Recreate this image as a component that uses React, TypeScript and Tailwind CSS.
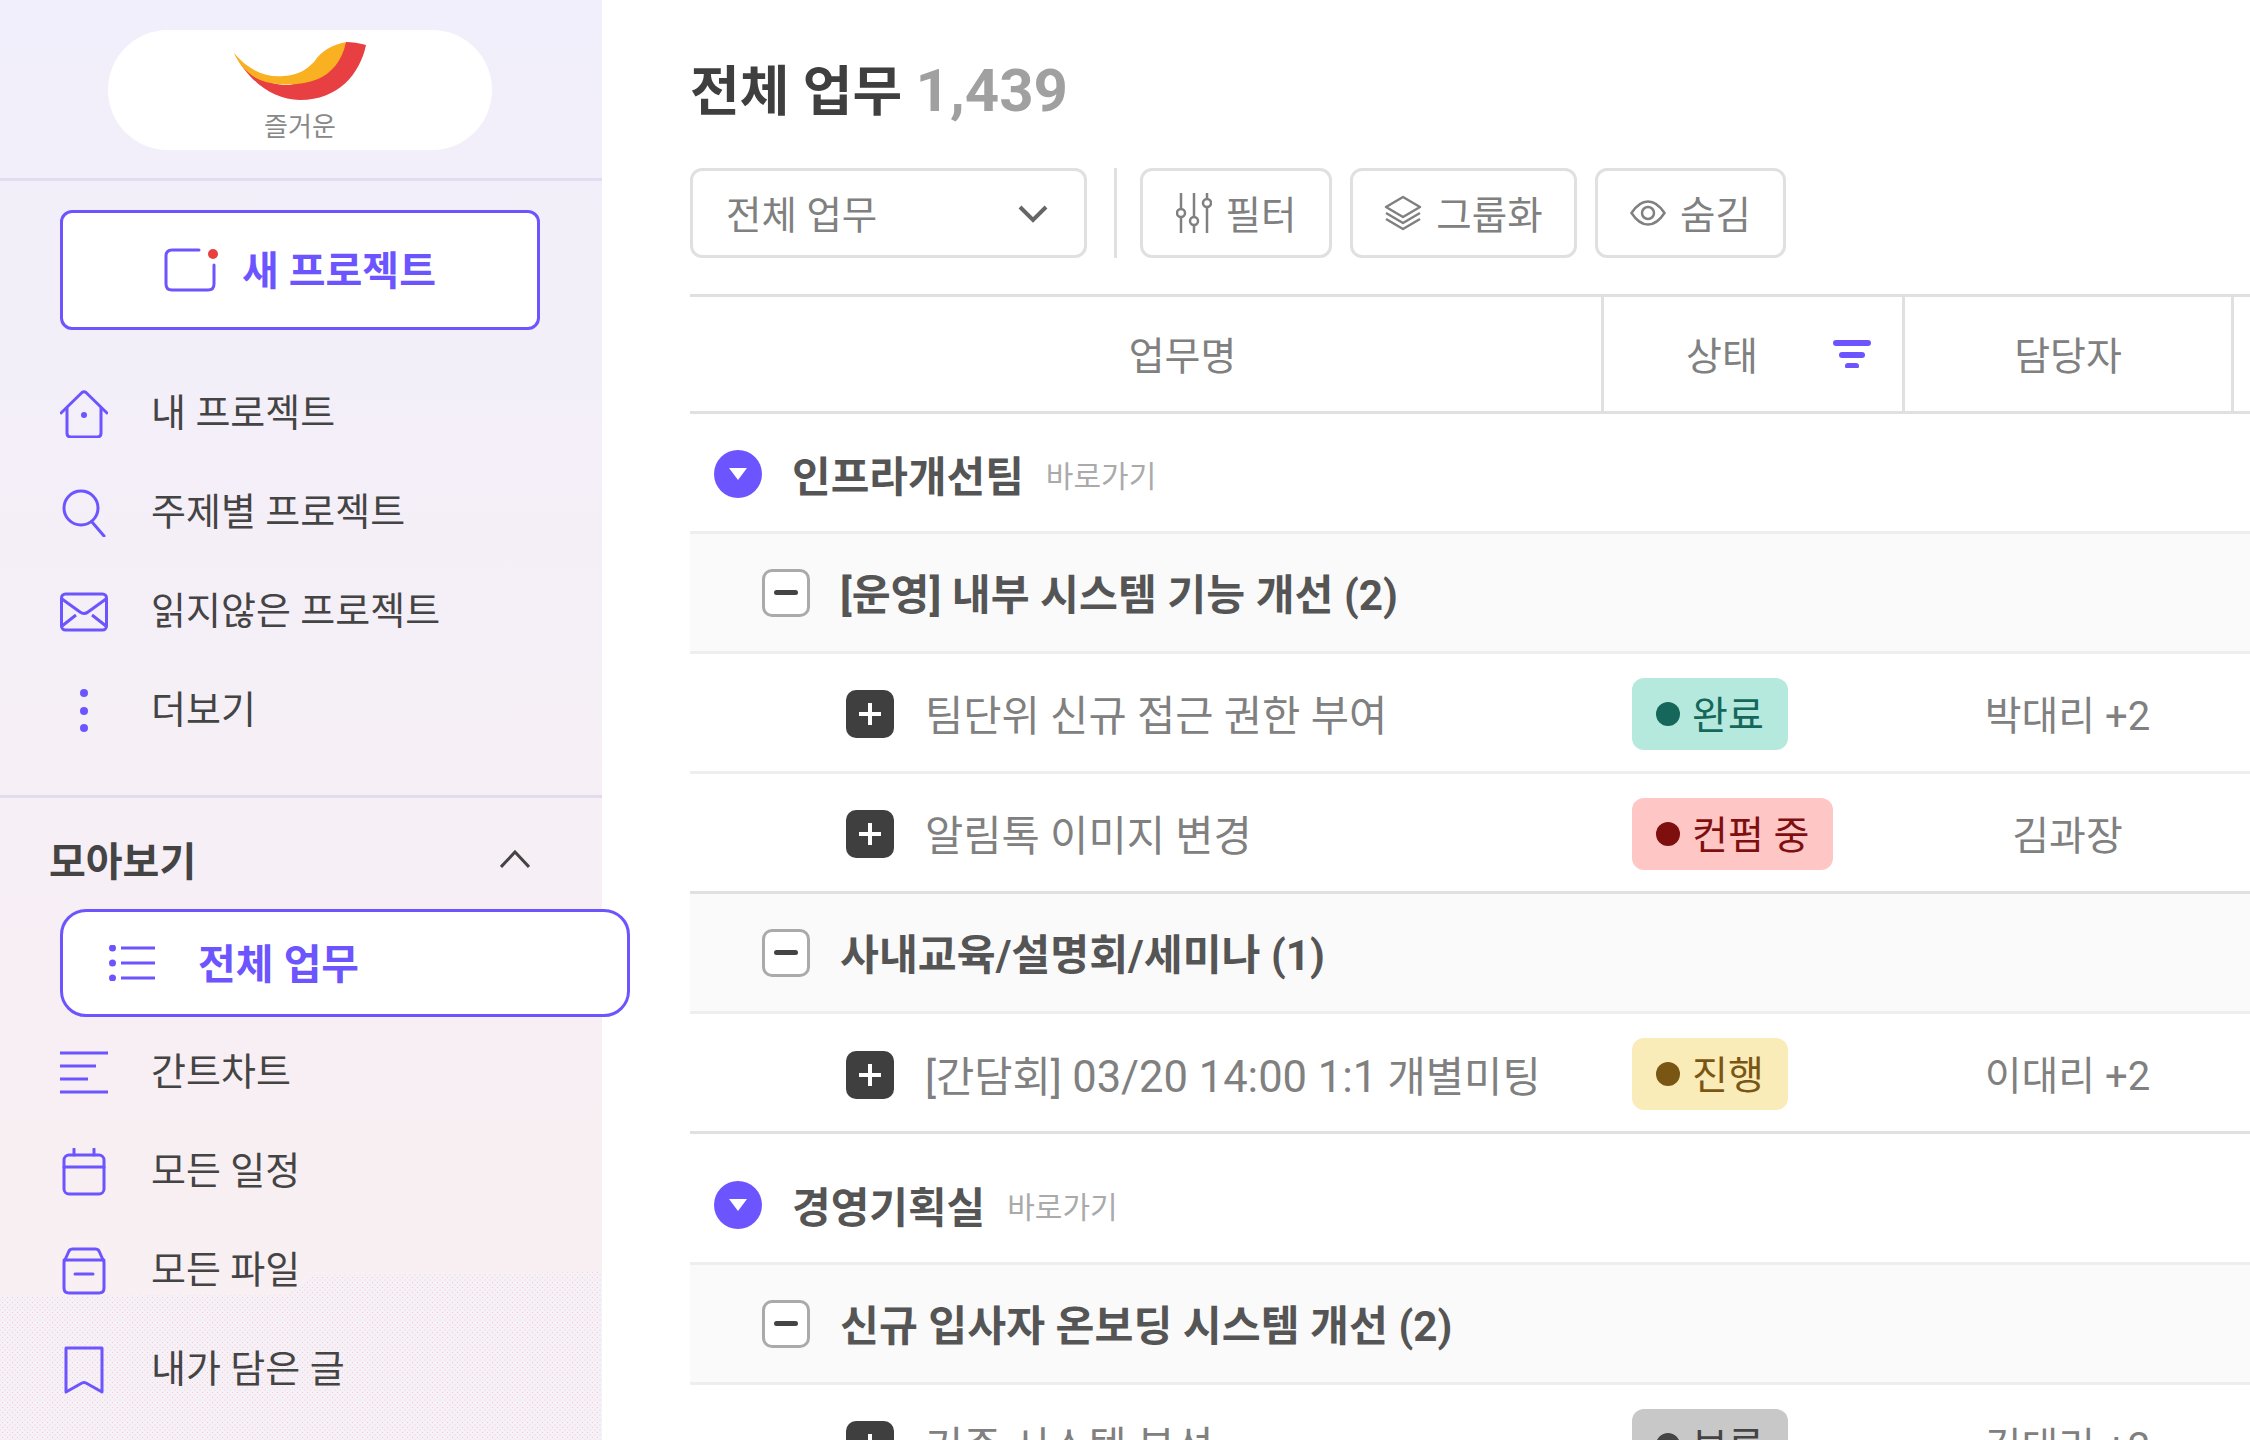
// 전체 업무 화면

const SANS = "font-['Roboto','Noto_Sans_CJK_KR',sans-serif]";

function HomeIcon() {
  return (
    <svg width="48" height="48" viewBox="0 0 48 48" fill="none" stroke="#6c55ff" strokeWidth="3" strokeLinecap="round" strokeLinejoin="round">
      <path d="M1 23 L22 2.5 Q24 1 26 2.5 L47 23" />
      <path d="M7 18 V43 Q7 47 11 47 H37 Q41 47 41 43 V18" />
      <circle cx="24" cy="25" r="3" fill="#6c55ff" stroke="none" />
    </svg>
  );
}

function SearchIcon() {
  return (
    <svg width="48" height="48" viewBox="0 0 48 48" fill="none" stroke="#6c55ff" strokeWidth="3" strokeLinecap="round">
      <circle cx="21" cy="19" r="17" />
      <path d="M32 33 L44 47" />
    </svg>
  );
}

function MailIcon() {
  return (
    <svg width="48" height="48" viewBox="0 0 48 48" fill="none" stroke="#6c55ff" strokeWidth="3" strokeLinejoin="round">
      <rect x="1.5" y="6" width="45" height="36" rx="4" />
      <path d="M2 11 L20 24 Q24 27 28 24 L46 11" />
      <path d="M2 38 L16 27 M46 38 L32 27" />
    </svg>
  );
}

function DotsIcon() {
  return (
    <svg width="48" height="48" viewBox="0 0 48 48" fill="#6c55ff">
      <circle cx="24" cy="6" r="4" />
      <circle cx="24" cy="24" r="4" />
      <circle cx="24" cy="41" r="4" />
    </svg>
  );
}

function GanttIcon() {
  return (
    <svg width="48" height="48" viewBox="0 0 48 48" fill="none" stroke="#6c55ff" strokeWidth="3">
      <path d="M0 4 H48 M0 17 H36 M0 30 H28 M0 43 H48" />
    </svg>
  );
}

function CalendarIcon() {
  return (
    <svg width="48" height="48" viewBox="0 0 48 48" fill="none" stroke="#6c55ff" strokeWidth="3" strokeLinecap="round">
      <rect x="4" y="7" width="40" height="39" rx="5" />
      <path d="M4 19 H44 M14 1 V7 M34 1 V7" />
    </svg>
  );
}

function BoxIcon() {
  return (
    <svg width="48" height="48" viewBox="0 0 48 48" fill="none" stroke="#6c55ff" strokeWidth="3" strokeLinecap="round" strokeLinejoin="round">
      <path d="M4 15 L9 4 Q10 2 13 2 H35 Q38 2 39 4 L44 15 V41 Q44 46 39 46 H9 Q4 46 4 41 Z" />
      <path d="M4 13 H44 M15 27 H33" />
    </svg>
  );
}

function BookmarkIcon() {
  return (
    <svg width="48" height="48" viewBox="0 0 48 48" fill="none" stroke="#6c55ff" strokeWidth="3" strokeLinejoin="round">
      <path d="M6 2 H42 V46 L26 37 Q24 36 22 37 L6 46 Z" />
    </svg>
  );
}

function ListIcon() {
  return (
    <svg width="46" height="36" viewBox="0 0 46 36" fill="none" stroke="#6c55ff" strokeWidth="3">
      <path d="M12 3 H46 M12 18 H46 M12 33 H46" />
      <g fill="#6c55ff" stroke="none">
        <circle cx="3.5" cy="3" r="3.5" />
        <circle cx="3.5" cy="18" r="3.5" />
        <circle cx="3.5" cy="33" r="3.5" />
      </g>
    </svg>
  );
}

function NewProjectIcon() {
  return (
    <svg width="54" height="44" viewBox="0 0 54 44" fill="none" stroke="#6c55ff" strokeWidth="3" strokeLinecap="round">
      <path d="M35 2 H8 Q2 2 2 8 V36 Q2 42 8 42 H44 Q50 42 50 36 V17" />
      <circle cx="49" cy="6" r="5" fill="#e8403f" stroke="none" />
    </svg>
  );
}

function SwooshLogo() {
  return (
    <svg width="132" height="58" viewBox="0 0 132 58">
      <path d="M0 11 C14 38 38 58 66 58 C104 58 126 32 132 3 C125 1 118 0 112 0 C104 18 84 36 56 43 C32 44 12 30 0 11 Z" fill="#e83f42" />
      <path d="M0 11 C14 28 32 36 50 34 C64 33 72 28 80 20 C88 8 98 3 112 0 C108 20 96 32 84 37 C64 45 36 44 22 36 C12 30 5 22 0 11 Z" fill="#f9b122" />
    </svg>
  );
}

function SlidersIcon() {
  return (
    <svg width="36" height="40" viewBox="0 0 36 40" fill="none" stroke="#808080" strokeWidth="2.5">
      <path d="M5 0 V16 M5 24 V40 M18 0 V24 M18 32 V40 M31 0 V6 M31 14 V40" />
      <circle cx="5" cy="20" r="4" />
      <circle cx="18" cy="28" r="4" />
      <circle cx="31" cy="10" r="4" />
    </svg>
  );
}

function LayersIcon() {
  return (
    <svg width="38" height="36" viewBox="0 0 38 36" fill="none" stroke="#808080" strokeWidth="2.5" strokeLinejoin="round">
      <path d="M19 2 L36 12 L19 22 L2 12 Z" />
      <path d="M2 18 L19 28 L36 18" />
      <path d="M2 24 L19 34 L36 24" />
    </svg>
  );
}

function EyeIcon() {
  return (
    <svg width="36" height="26" viewBox="0 0 36 26" fill="none" stroke="#808080" strokeWidth="2.5">
      <path d="M1.5 13 Q9 1.5 18 1.5 Q27 1.5 34.5 13 Q27 24.5 18 24.5 Q9 24.5 1.5 13 Z" />
      <circle cx="18" cy="13" r="6" />
    </svg>
  );
}

const topNav = [
  { label: "내 프로젝트", icon: <HomeIcon /> },
  { label: "주제별 프로젝트", icon: <SearchIcon /> },
  { label: "읽지않은 프로젝트", icon: <MailIcon /> },
  { label: "더보기", icon: <DotsIcon /> },
];

const bottomNav = [
  { label: "간트차트", icon: <GanttIcon /> },
  { label: "모든 일정", icon: <CalendarIcon /> },
  { label: "모든 파일", icon: <BoxIcon /> },
  { label: "내가 담은 글", icon: <BookmarkIcon /> },
];

function NavItem({ label, icon }: { label: string; icon: React.ReactNode }) {
  return (
    <div className="relative flex h-[99px] items-center gap-[43px] pl-[60px]">
      <span className="h-[48px] w-[48px] shrink-0">{icon}</span>
      <span className="text-[38px] text-[#444444]">{label}</span>
    </div>
  );
}

function Sidebar() {
  return (
    <aside className="relative z-10 h-[1440px] w-[602px] shrink-0 bg-gradient-to-b from-[#f1effb] via-[#f8eff3] via-80% to-[#f9f0f4]">
      {/* 하단 노이즈 */}
      <div className="pointer-events-none absolute inset-x-0 bottom-0 h-[170px] bg-[#f5f1f8] bg-[radial-gradient(#ffc4c4_0.8px,transparent_1px),radial-gradient(#ffc4c4_0.8px,transparent_1px)] bg-[size:5px_5px] bg-[position:0_0,2.5px_2.5px] [clip-path:polygon(0_26px,48%_25px,52%_5px,100%_2px,100%_100%,0_100%)]" />

      {/* 로고 */}
      <div className="relative h-[181px] border-b-[3px] border-[#e2dcf0] pt-[30px]">
        <div className="ml-[108px] flex h-[120px] w-[384px] flex-col items-center rounded-full bg-white pt-[12px]">
          <SwooshLogo />
          <span className="mt-[7px] text-[26px] leading-[40px] text-[#888888]">즐거운</span>
        </div>
      </div>

      <div className="relative px-[60px] pt-[29px]">
        <button className="flex h-[120px] w-[480px] items-center justify-center gap-[24px] rounded-[12px] border-[3px] border-[#6c55ff] bg-white text-[40px] font-bold text-[#6c55ff]">
          <NewProjectIcon />
          <span className="pt-[4px]">새 프로젝트</span>
        </button>
      </div>

      <nav className="pt-[34px]">
        {topNav.map((item) => (
          <NavItem key={item.label} {...item} />
        ))}
      </nav>

      <div className="mt-[35px] border-t-[3px] border-[#e2dcf0]" />

      <div className="flex h-[111px] items-center justify-between pt-[19px] pr-[72px] pl-[49px]">
        <span className="text-[40px] font-bold text-[#444444]">모아보기</span>
        <svg className="mb-[8px]" width="30" height="18" viewBox="0 0 30 18" fill="none" stroke="#444444" strokeWidth="3">
          <path d="M1 17 L15 2 L29 17" />
        </svg>
      </div>

      <div className="relative ml-[60px] flex h-[108px] w-[570px] items-center gap-[43px] rounded-[26px] border-[3px] border-[#6c55ff] bg-white pl-[46px] text-[41px] font-bold text-[#6c55ff]">
        <ListIcon />
        <span className="pt-[6px]">전체 업무</span>
      </div>

      <nav className="pt-[6px]">
        {bottomNav.map((item) => (
          <NavItem key={item.label} {...item} />
        ))}
      </nav>
    </aside>
  );
}

function ToolButton({ icon, label, width }: { icon: React.ReactNode; label: string; width: string }) {
  return (
    <button className={`flex h-[90px] items-center justify-center gap-[14px] rounded-[12px] border-[3px] border-[#e0e0e0] text-[38.5px] text-[#808080] ${width}`}>
      {icon}
      <span className="pt-[6px]">{label}</span>
    </button>
  );
}

function Toolbar() {
  return (
    <div className="mt-[37px] flex items-center">
      <div className="flex h-[90px] w-[397px] items-center justify-between rounded-[12px] border-[3px] border-[#e0e0e0] pr-[36px] pl-[33px] text-[38.5px] text-[#808080]">
        <span className="pt-[6px]">전체 업무</span>
        <svg className="mt-[2px]" width="30" height="18" viewBox="0 0 30 18" fill="none" stroke="#666666" strokeWidth="4">
          <path d="M2 2 L15 15 L28 2" />
        </svg>
      </div>
      <div className="mr-[23px] ml-[27px] h-[90px] w-[3px] bg-[#e0e0e0]" />
      <div className="flex gap-[18px]">
        <ToolButton icon={<SlidersIcon />} label="필터" width="w-[192px]" />
        <ToolButton icon={<LayersIcon />} label="그룹화" width="w-[227px]" />
        <ToolButton icon={<EyeIcon />} label="숨김" width="w-[191px]" />
      </div>
    </div>
  );
}

function TableHead() {
  return (
    <div className="mt-[36px] flex h-[120px] border-y-[3px] border-[#e0e0e0] text-[39px] text-[#808080]">
      <div className="flex w-[914px] items-center justify-center border-r-[3px] border-[#e0e0e0] pt-[6px] pl-[74px]">업무명</div>
      <div className="relative flex w-[301px] items-center justify-center border-r-[3px] border-[#e0e0e0] pt-[6px] pr-[62px]">
        상태
        <svg className="absolute right-[31px] top-[43px]" width="38" height="28" viewBox="0 0 38 28" fill="#6c55ff">
          <rect x="0" y="0" width="38" height="6" rx="3" />
          <rect x="6" y="12" width="26" height="6" rx="3" />
          <rect x="12" y="23" width="14" height="6" rx="3" />
        </svg>
      </div>
      <div className="flex w-[329px] items-center justify-center border-r-[3px] border-[#e0e0e0] pt-[6px]">담당자</div>
      <div className="flex-1" />
    </div>
  );
}

function GroupRow({ name, tall }: { name: string; tall?: boolean }) {
  return (
    <div className={`flex items-center border-b-[3px] border-[#eeeeee] pl-[24px] ${tall ? "h-[131px] pt-[14px]" : "h-[120px] pt-[3px]"}`}>
      <span className="flex h-[48px] w-[48px] items-center justify-center rounded-full bg-[#6c55ff]">
        <svg width="18" height="12" viewBox="0 0 18 12" fill="#ffffff">
          <path d="M0 0 H18 L9 12 Z" />
        </svg>
      </span>
      <span className="ml-[30px] pt-[6px] text-[42px] font-bold text-[#555555]">{name}</span>
      <span className="ml-[22px] pt-[4px] text-[30px] text-[#aaaaaa]">바로가기</span>
    </div>
  );
}

function SubGroupRow({ name }: { name: string }) {
  return (
    <div className="flex h-[120px] items-center border-b-[3px] border-[#eeeeee] bg-[#fafafa] pl-[72px]">
      <span className="flex h-[48px] w-[48px] items-center justify-center rounded-[10px] border-[3px] border-[#aaaaaa] bg-white">
        <span className="h-[5px] w-[24px] rounded-full bg-[#444444]" />
      </span>
      <span className="ml-[30px] pt-[6px] text-[42.3px] font-bold text-[#555555]">{name}</span>
    </div>
  );
}

type Status = "done" | "hold" | "doing" | "wait";

const statusStyle: Record<Status, { box: string; dot: string; label: string }> = {
  done: { box: "bg-[#b6e9dd] text-[#14675a]", dot: "bg-[#14675a]", label: "완료" },
  hold: { box: "bg-[#ffc6c6] text-[#7f0f0f]", dot: "bg-[#7f0f0f]", label: "컨펌 중" },
  doing: { box: "bg-[#faecb8] text-[#7a5614]", dot: "bg-[#7a5614]", label: "진행" },
  wait: { box: "bg-[#c8c8c8] text-[#444444]", dot: "bg-[#444444]", label: "보류" },
};

function TaskRow({ name, status, owner, divider }: { name: React.ReactNode; status: Status; owner: string; divider: string }) {
  const s = statusStyle[status];
  return (
    <div className={`flex h-[120px] items-center border-b-[3px] pt-[2px] ${divider}`}>
      <div className="flex w-[914px] items-center pl-[156px]">
        <span className="mt-[2px] flex h-[48px] w-[48px] items-center justify-center rounded-[10px] bg-[#3f3f3f]">
          <svg width="26" height="26" viewBox="0 0 26 26" stroke="#ffffff" strokeWidth="4">
            <path d="M13 2 V24 M2 13 H24" />
          </svg>
        </span>
        <span className="ml-[31px] pt-[8px] text-[41.6px] text-[#808080]">{name}</span>
      </div>
      <div className="w-[301px] pl-[28px]">
        <span className={`inline-flex h-[72px] items-center gap-[12px] rounded-[12px] pr-[24px] pl-[24px] text-[39px] ${s.box}`}>
          <span className={`h-[24px] w-[24px] rounded-full ${s.dot}`} />
          <span className="pt-[5px]">{s.label}</span>
        </span>
      </div>
      <div className="w-[329px] pt-[6px] pr-[4px] text-center text-[40px] text-[#808080]">{owner}</div>
    </div>
  );
}

export default function App() {
  return (
    <div className={`flex h-[1440px] w-[2250px] overflow-hidden bg-white ${SANS}`}>
      <Sidebar />
      <main className="min-w-0 flex-1 pt-[53px] pl-[88px]">
        <h1 className="text-[54px] leading-[76px] font-bold text-[#3f3f3f]">
          전체 업무 <span className="text-[60px] text-[#a0a0a0]">1,439</span>
        </h1>
        <Toolbar />
        <TableHead />
        <GroupRow name="인프라개선팀" />
        <SubGroupRow name="[운영] 내부 시스템 기능 개선 (2)" />
        <TaskRow name="팀단위 신규 접근 권한 부여" status="done" owner="박대리 +2" divider="border-[#eeeeee]" />
        <TaskRow name="알림톡 이미지 변경" status="hold" owner="김과장" divider="border-[#e0e0e0]" />
        <SubGroupRow name="사내교육/설명회/세미나 (1)" />
        <TaskRow
          name={<>[간담회] <span className="text-[43.5px]">03/20 14:00 1:1</span> 개별미팅</>}
          status="doing"
          owner="이대리 +2"
          divider="border-[#e0e0e0]"
        />
        <GroupRow name="경영기획실" tall />
        <SubGroupRow name="신규 입사자 온보딩 시스템 개선 (2)" />
        <TaskRow name="기존 시스템 분석" status="wait" owner="김대리 +2" divider="border-[#eeeeee]" />
      </main>
    </div>
  );
}
